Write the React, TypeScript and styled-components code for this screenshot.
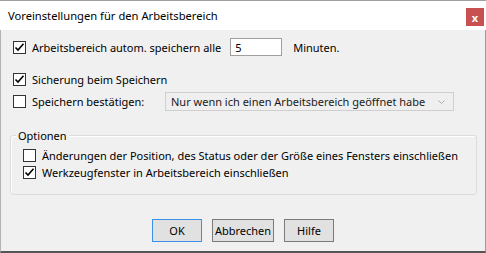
import styled, { createGlobalStyle } from "styled-components";

const GlobalStyle = createGlobalStyle`
    html, body {
        margin: 0;
        padding: 0;
        background: #f0f0f0;
    }
    body {
        font-family: "Noto Sans", "Open Sans", sans-serif;
        font-size: 11px;
        color: #000;
    }
`

const Window = styled.div`
    width: 486px;
    height: 253px;
    display: flex;
    flex-direction: column;
    box-sizing: border-box;
    border-top: 1px solid #a0a0a0;
    background: #f0f0f0;
`

const TitleBar = styled.div`
    height: 29px;
    flex-shrink: 0;
    display: flex;
    align-items: flex-start;
    justify-content: space-between;
    background: #fff;
    padding-left: 8px;
    padding-right: 2px;
`

const Title = styled.span`
    line-height: 29px;
    font-size: 11.2px;
`

const CloseButton = styled.div`
    width: 18px;
    height: 18px;
    margin-top: 7px;
    background: #c75050;
    color: #fff;
    font-weight: bold;
    font-size: 11px;
    display: flex;
    align-items: center;
    justify-content: center;
    line-height: 1;
`

const Body = styled.div`
    flex: 1;
    display: flex;
    flex-direction: column;
    border-left: 1px solid #b4b4b4;
    border-right: 1px solid #9a9a9a;
    border-bottom: 2px solid #555;
`

const Row = styled.div<{ $top: number; $height?: number; $indent?: number }>`
    display: flex;
    align-items: center;
    height: ${p => p.$height ?? 18}px;
    margin-top: ${p => p.$top}px;
    padding-left: ${p => p.$indent ?? 12}px;
`

const Box = styled.span`
    width: 13px;
    height: 13px;
    box-sizing: border-box;
    border: 1px solid #333;
    background: #fff;
    display: flex;
    align-items: center;
    justify-content: center;
    flex-shrink: 0;
    margin-right: 6px;
`

const Label = styled.span<{ $width?: number }>`
    white-space: nowrap;
    ${p => p.$width ? `width: ${p.$width}px;` : ""}
`

const NumberInput = styled.div`
    width: 52px;
    height: 18px;
    box-sizing: border-box;
    border: 1px solid #a0a0a0;
    background: #fff;
    padding-left: 4px;
    display: flex;
    align-items: center;
    margin-left: 9px;
    margin-right: 11px;
`

const Select = styled.div`
    width: 289px;
    height: 19px;
    box-sizing: border-box;
    border: 1px solid #cfcfcf;
    background: #efefef;
    display: flex;
    align-items: center;
    justify-content: space-between;
    padding: 0 8px 0 5px;
    color: #1a1a1a;
    white-space: nowrap;
`

const GroupBox = styled.div`
    margin: 24px 8px 0 9px;
    height: 58px;
    border: 1px solid #dcdcdc;
    border-radius: 3px;
    box-shadow: inset 1px 1px 0 #fff;
`

const Legend = styled.div`
    margin: -9px 0 0 5px;
    padding: 0 2px;
    width: fit-content;
    background: #f0f0f0;
    line-height: 17px;
`

const ButtonRow = styled.div`
    display: flex;
    justify-content: center;
    gap: 10px;
    margin-top: 24px;
`

const Button = styled.div<{ $width: number; $focused?: boolean }>`
    width: ${p => p.$width}px;
    height: 23px;
    box-sizing: border-box;
    border: 1px solid ${p => p.$focused ? "#3c8ee6" : "#7a7a7a"};
    background: #e1e1e1;
    display: flex;
    align-items: center;
    justify-content: center;
`

function CheckBox({ checked }: { checked?: boolean }) {
    return (
        <Box>
            {checked && (
                <svg width="11" height="11" viewBox="0 0 11 11">
                    <path d="M1.5 5.5 L4 8 L9.5 1.8" fill="none" stroke="#000" strokeWidth="1.6" />
                </svg>
            )}
        </Box>
    )
}

export default function App() {
    return (
        <>
            <GlobalStyle />
            <Window>
                <TitleBar>
                    <Title>Voreinstellungen für den Arbeitsbereich</Title>
                    <CloseButton>x</CloseButton>
                </TitleBar>
                <Body>
                    <Row $top={8}>
                        <CheckBox checked />
                        <Label>Arbeitsbereich autom. speichern alle</Label>
                        <NumberInput>5</NumberInput>
                        <Label>Minuten.</Label>
                    </Row>
                    <Row $top={14}>
                        <CheckBox checked />
                        <Label>Sicherung beim Speichern</Label>
                    </Row>
                    <Row $top={4} $height={19}>
                        <CheckBox />
                        <Label $width={133}>Speichern bestätigen:</Label>
                        <Select>
                            <span>Nur wenn ich einen Arbeitsbereich geöffnet habe</span>
                            <svg width="7" height="4" viewBox="0 0 7 4">
                                <path d="M0.5 0.5 L3.5 3.5 L6.5 0.5" fill="none" stroke="#aaa" strokeWidth="1" />
                            </svg>
                        </Select>
                    </Row>
                    <GroupBox>
                        <Legend>Optionen</Legend>
                        <Row $top={3} $height={17} $indent={12}>
                            <CheckBox />
                            <Label>Änderungen der Position, des Status oder der Größe eines Fensters einschließen</Label>
                        </Row>
                        <Row $top={0} $height={17} $indent={12}>
                            <CheckBox checked />
                            <Label>Werkzeugfenster in Arbeitsbereich einschließen</Label>
                        </Row>
                    </GroupBox>
                    <ButtonRow>
                        <Button $width={50} $focused>OK</Button>
                        <Button $width={62}>Abbrechen</Button>
                        <Button $width={50}>Hilfe</Button>
                    </ButtonRow>
                </Body>
            </Window>
        </>
    )
}
